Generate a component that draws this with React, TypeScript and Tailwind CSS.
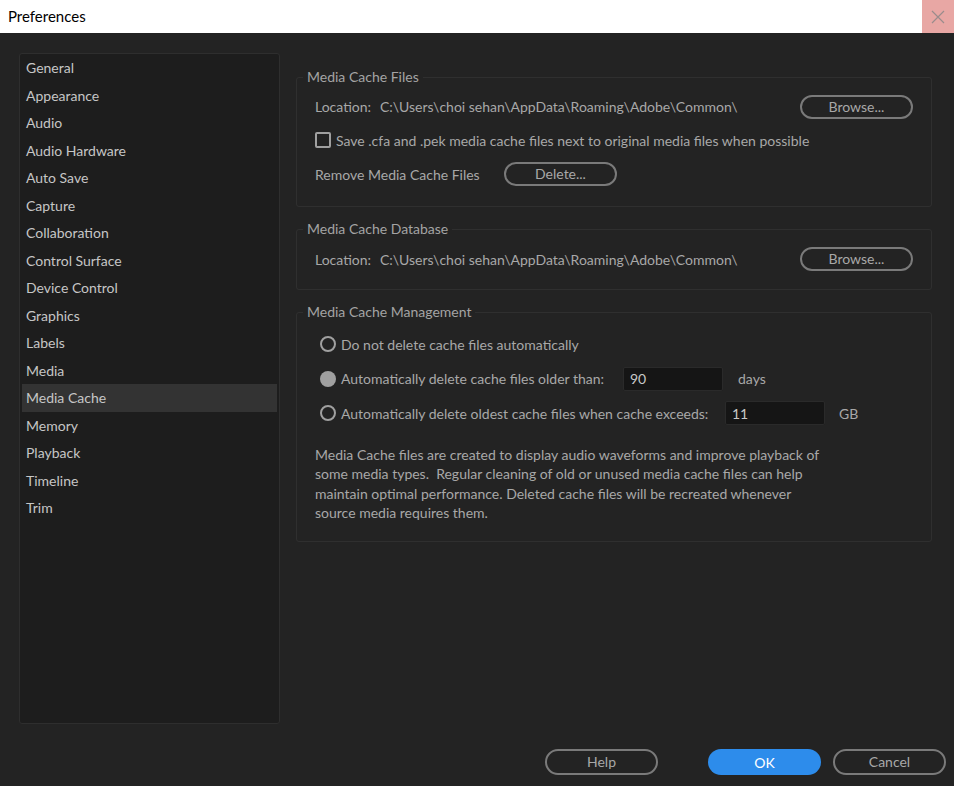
import { useState } from 'react'

const categories = [
  'General',
  'Appearance',
  'Audio',
  'Audio Hardware',
  'Auto Save',
  'Capture',
  'Collaboration',
  'Control Surface',
  'Device Control',
  'Graphics',
  'Labels',
  'Media',
  'Media Cache',
  'Memory',
  'Playback',
  'Timeline',
  'Trim',
]

const PATH = 'C:\\Users\\choi sehan\\AppData\\Roaming\\Adobe\\Common\\'

const PillButton = ({ label, className = '' }: { label: string; className?: string }) => (
  <button
    className={`h-[24px] w-[113px] rounded-full border-2 border-[#7a7a7a] text-[14px] text-[#a8a8a8] leading-none ${className}`}
  >
    {label}
  </button>
)

const Group = ({ title, children, className = '' }: { title: string; children: React.ReactNode; className?: string }) => (
  <fieldset className={`rounded-[3px] border border-[#2f2f2f] pl-[18px] pr-[18px] ${className}`}>
    <legend className="ml-[-12px] px-[4px] text-[14px] leading-[16px] text-[#a4a4a4]">{title}</legend>
    {children}
  </fieldset>
)

const Radio = ({ checked }: { checked?: boolean }) =>
  checked ? (
    <span className="inline-block h-[16px] w-[16px] rounded-full bg-[#a0a0a0]" />
  ) : (
    <span className="inline-block h-[16px] w-[16px] rounded-full border-2 border-[#a0a0a0]" />
  )

export default function App() {
  const [selected, setSelected] = useState('Media Cache')

  return (
    <div
      className="flex h-[786px] w-[954px] flex-col bg-[#232323] text-[14px]"
      style={{ fontFamily: 'Lato, "Open Sans", sans-serif' }}
    >
      {/* title bar */}
      <div className="flex h-[33px] items-center justify-between bg-white">
        <span className="pl-[8px] text-[15px] text-black">Preferences</span>
        <div className="flex h-[33px] w-[32px] items-center justify-center bg-[#e8a7a4] text-[#9a8c8c]">
          <svg width="14" height="14" viewBox="0 0 14 14" fill="none" stroke="currentColor" strokeWidth="1.2">
            <path d="M1 1 L13 13 M13 1 L1 13" />
          </svg>
        </div>
      </div>

      <div className="flex flex-1 gap-[16px] pl-[19px] pr-[22px] pt-[20px]">
        {/* category list */}
        <div className="h-[671px] w-[261px] rounded-[3px] border border-[#2e2e2e] bg-[#1d1d1d] px-[2px] pt-[0px]">
          {categories.map((c) => (
            <div
              key={c}
              onClick={() => setSelected(c)}
              className={`flex h-[27.5px] items-center pl-[4px] text-[#c6c6c6] ${
                c === selected ? 'bg-[#333333]' : ''
              }`}
            >
              {c}
            </div>
          ))}
        </div>

        {/* settings */}
        <div className="mt-[16px] flex flex-1 flex-col">
          <Group title="Media Cache Files" className="h-[138px]">
            <div className="mt-[6px] flex h-[31px] items-center text-[#a8a8a8]">
              <span className="w-[65px]">Location:</span>
              <span>{PATH}</span>
              <PillButton label="Browse..." className="ml-auto mr-[0px]" />
            </div>
            <label className="flex h-[36px] items-center text-[#a8a8a8]">
              <span className="mr-[5px] inline-block h-[16px] w-[16px] rounded-[2px] border-2 border-[#a0a0a0]" />
              Save .cfa and .pek media cache files next to original media files when possible
            </label>
            <div className="flex h-[32px] items-center text-[#a8a8a8]">
              <span className="w-[189px]">Remove Media Cache Files</span>
              <PillButton label="Delete..." />
            </div>
          </Group>

          <Group title="Media Cache Database" className="mt-[14px] h-[69px]">
            <div className="flex h-[44px] items-center text-[#a8a8a8]">
              <span className="w-[65px]">Location:</span>
              <span>{PATH}</span>
              <PillButton label="Browse..." className="ml-auto" />
            </div>
          </Group>

          <Group title="Media Cache Management" className="mt-[14px] h-[238px]">
            <div className="mt-[6px] flex h-[36px] items-center gap-[5px] pl-[5px] text-[#a8a8a8]">
              <Radio />
              <span>Do not delete cache files automatically</span>
            </div>
            <div className="flex h-[33px] items-center gap-[5px] pl-[5px] text-[#a8a8a8]">
              <Radio checked />
              <span className="w-[277px]">Automatically delete cache files older than:</span>
              <div className="flex h-[24px] w-[100px] items-center rounded-[2px] border border-[#2a2a2a] bg-[#151515] pl-[6px] text-[#c8c8c8]">
                90
              </div>
              <span className="ml-[10px]">days</span>
            </div>
            <div className="flex h-[36px] items-center gap-[5px] pl-[5px] text-[#a8a8a8]">
              <Radio />
              <span className="w-[379px]">Automatically delete oldest cache files when cache exceeds:</span>
              <div className="flex h-[24px] w-[100px] items-center rounded-[2px] border border-[#2a2a2a] bg-[#151515] pl-[6px] text-[#c8c8c8]">
                11
              </div>
              <span className="ml-[9px]">GB</span>
            </div>
            <p className="mt-[14px] w-[520px] leading-[19.3px] text-[#a8a8a8]">
              Media Cache files are created to display audio waveforms and improve playback of some media types.&nbsp; Regular cleaning of old or unused media cache files can help maintain optimal performance. Deleted cache files will be recreated whenever source media requires them.
            </p>
          </Group>
        </div>
      </div>

      {/* footer buttons */}
      <div className="flex h-[62px] items-start pt-[25px] pl-[545px]">
        <PillButton label="Help" className="h-[26px]" />
        <button className="ml-[50px] h-[26px] w-[113px] rounded-full bg-[#2d8ceb] text-[14px] text-white">OK</button>
        <PillButton label="Cancel" className="ml-[12px] h-[26px]" />
      </div>
    </div>
  )
}
